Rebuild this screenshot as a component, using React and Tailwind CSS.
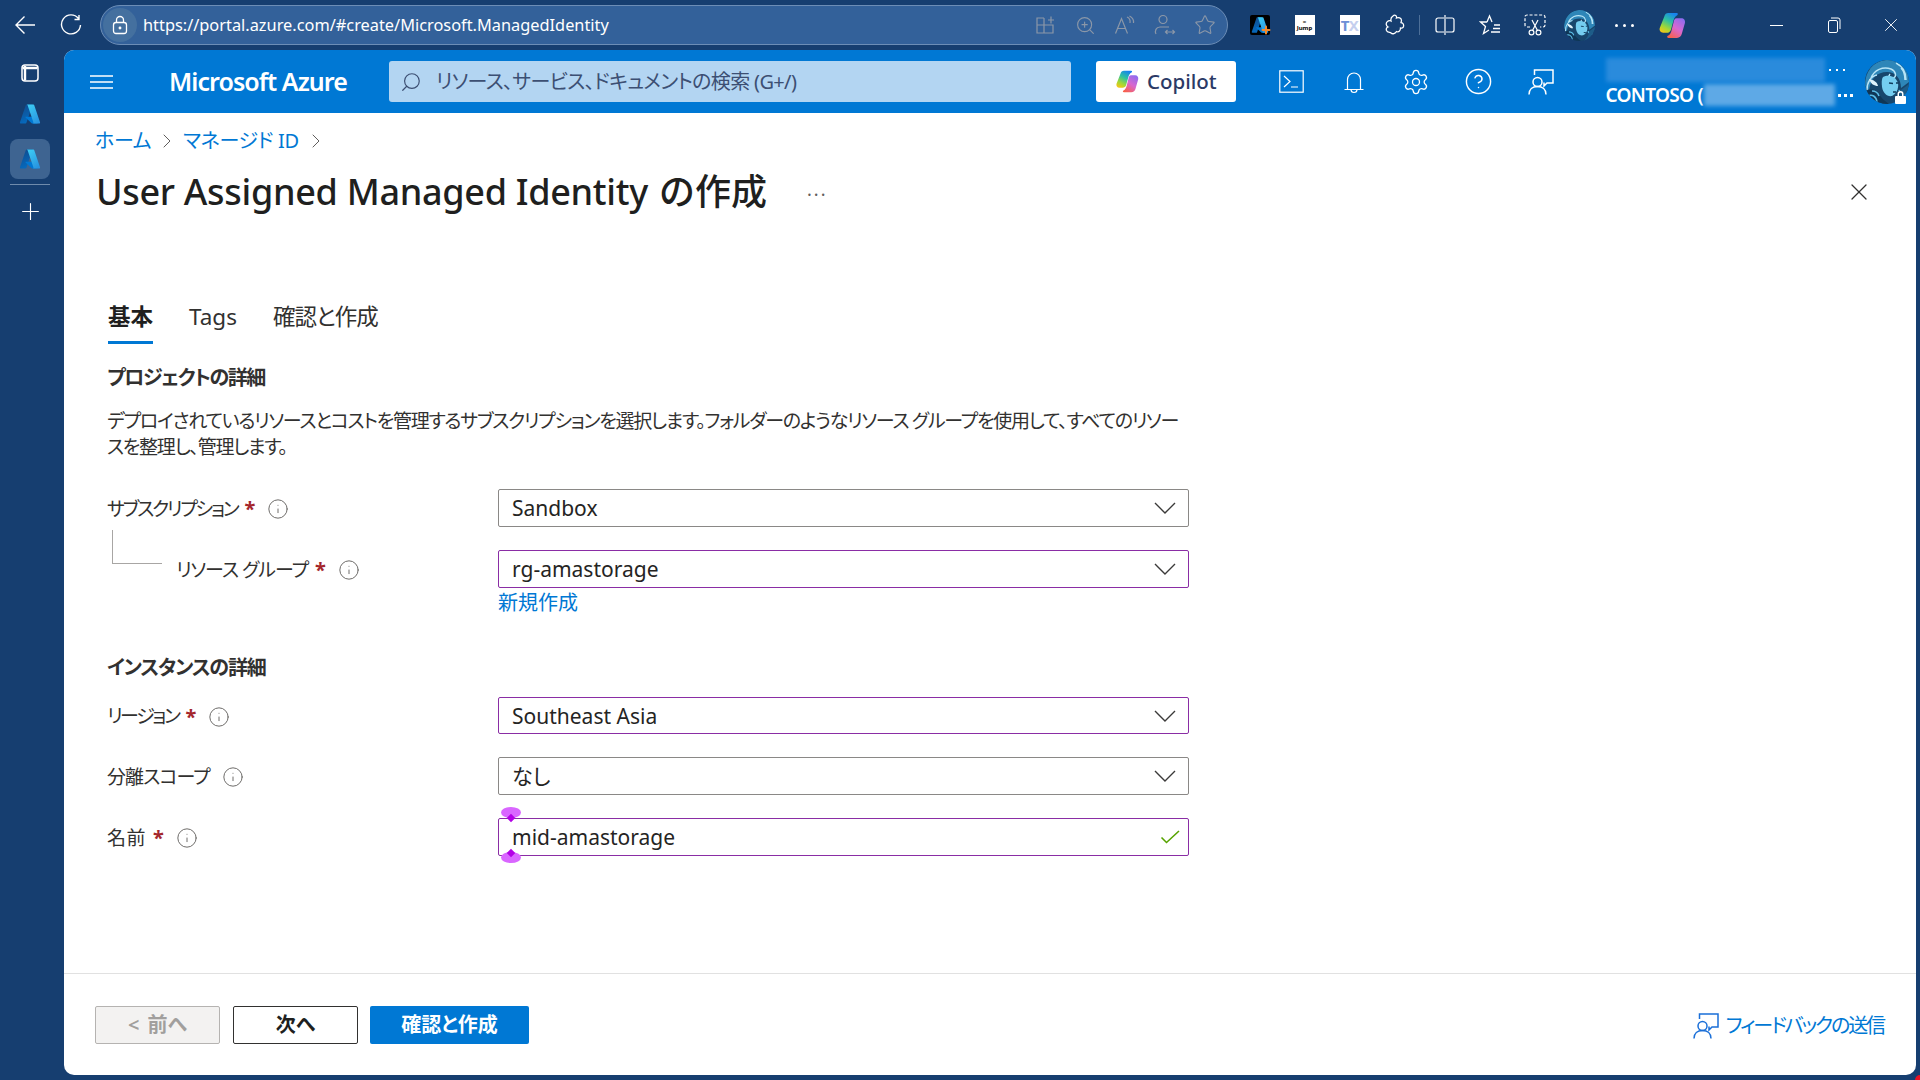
import React from 'react';
import { Info, Settings, CircleHelp, X, ChevronRight, Plus, Search, ZoomIn, Star } from 'lucide-react';

const Azure = ({ id, size = 24 }) => (
  <svg width={size} height={size} viewBox="0 0 96 96">
    <defs>
      <linearGradient id={`${id}a`} x1="0" y1="0" x2="0.3" y2="1">
        <stop offset="0" stopColor="#114a8b" />
        <stop offset="1" stopColor="#0669bc" />
      </linearGradient>
      <linearGradient id={`${id}b`} x1="0.2" y1="0" x2="0.8" y2="1">
        <stop offset="0" stopColor="#3ccbf4" />
        <stop offset="1" stopColor="#2892df" />
      </linearGradient>
    </defs>
    <path fill={`url(#${id}a)`} d="M33.338 6.544h26.038l-27.03 80.087a4.152 4.152 0 0 1-3.933 2.824H8.149a4.145 4.145 0 0 1-3.928-5.47L29.404 9.368a4.152 4.152 0 0 1 3.934-2.825z" />
    <path fill="#0078d4" d="M71.175 60.261h-41.29a1.911 1.911 0 0 0-1.305 3.309l26.532 24.764a4.171 4.171 0 0 0 2.846 1.121h23.38z" />
    <path fill={`url(#${id}b)`} d="M66.595 9.364a4.145 4.145 0 0 0-3.928-2.82H33.648a4.146 4.146 0 0 1 3.928 2.82l25.184 74.62a4.146 4.146 0 0 1-3.928 5.472h29.02a4.146 4.146 0 0 0 3.927-5.472z" />
  </svg>
);

const CopilotLogo = ({ id, size = 28 }) => (
  <svg width={size} height={size} viewBox="0 0 28 28">
    <defs>
      <linearGradient id={`${id}l`} x1="0.7" y1="0" x2="0.2" y2="1">
        <stop offset="0" stopColor="#1683ef" />
        <stop offset="0.4" stopColor="#2fc2a0" />
        <stop offset="0.75" stopColor="#a5d833" />
        <stop offset="1" stopColor="#f5c518" />
      </linearGradient>
      <linearGradient id={`${id}r`} x1="0.8" y1="0" x2="0.2" y2="1">
        <stop offset="0" stopColor="#8d6cf0" />
        <stop offset="0.5" stopColor="#d868d0" />
        <stop offset="1" stopColor="#f8604a" />
      </linearGradient>
    </defs>
    <path fill={`url(#${id}l)`} d="M10 2h8c1.5 0 1.5 1.5.5 2-2 1-3 3-3.5 5l-2.5 9c-.6 2-2 3-4 3H5c-2.5 0-4-2-3.3-4.5L6 5.500C6.700 3 8 2 10 2z" />
    <path fill={`url(#${id}r)`} d="M18 7h4.500c2.500 0 4 2 3.500 4.500L23 22c-.7 2.500-2.200 4-4.700 4H10c-1.500 0-1.500-1.500-.5-2 2-1 3-3 3.500-5l2-8c.4-2 1-4 3-4z" />
  </svg>
);

const Avatar = ({ id, size }) => (
  <svg width={size} height={size} viewBox="0 0 44 44">
    <defs>
      <clipPath id={id}>
        <circle cx="22" cy="22" r="22" />
      </clipPath>
    </defs>
    <g clipPath={`url(#${id})`}>
      <rect width="44" height="44" fill="#17466c" />
      <path d="M0 26C0 8 12-2 28 0c10 2 16 10 16 22l-8 6c0-10-6-16-14-16C12 12 6 18 4 30z" fill="#2e86b8" />
      <path d="M6 18c3-8 12-12 20-9 5 2 6 8 2 9-3 1-5-2-3-4M2 30C2 22 6 16 12 15M31 3c6 3 10 9 10 17M36 8c3 3 4 7 4 12" stroke="#b7e4f6" strokeWidth="1.500" fill="none" />
      <path d="M18 17c5-3 13-1 15 6 1 6-2 11-6 13-5 1-9-3-10-9-.5-4-.5-8 1-10z" fill="#74cdf0" />
      <path d="M24 23l4 .5M31 23h2.500M28 32h3" stroke="#0e3a5a" strokeWidth="1.300" />
      <path d="M0 32c6-4 11-3 14 2 2 4 6 7 10 10H0z" fill="#0f3656" />
      <path d="M3 36c4-2 8 0 9 6M7 31c3 0 6 2 7 5M34 30c2 4 6 5 10 4" stroke="#5bbce6" strokeWidth="1.600" fill="none" />
      <path d="M36 30l8-6v20H28c4-3 7-8 8-14z" fill="#1d5c88" />
      <path d="M4 19c5 1 8 3 9 7-4 0-7-2-9-7z" fill="#dff2fb" />
    </g>
  </svg>
);

const Field = ({ value, focus, check, pins }) => (
  <div className={`relative flex items-center justify-between w-[691px] h-full pl-[13px] bg-white border rounded-[2px] ${focus ? 'border-[#8a2da5]' : 'border-[#8a8886]'}`}>
    {pins && (
      <>
        <span className="absolute left-[2px] top-[-12px] w-[20px] h-[11px] rounded-[50%] bg-[#d966ff]" />
        <span className="absolute left-[9px] top-[-4px] w-[6px] h-[6px] rotate-45 bg-[#b300e6]" />
        <span className="absolute left-[2px] bottom-[-8px] w-[20px] h-[11px] rounded-[50%] bg-[#d966ff]" />
        <span className="absolute left-[9px] bottom-[-1px] w-[6px] h-[6px] rotate-45 bg-[#b300e6]" />
      </>
    )}
    <span className="pt-[1px] text-[21px] text-[#252423] leading-none">{value}</span>
    {check ? (
      <svg className="mr-[8px]" width="20" height="14" viewBox="0 0 20 14" fill="none" stroke="#57a300" strokeWidth="1.600">
        <path d="M1.500 7.500l5 5L19 1" />
      </svg>
    ) : (
      <svg className="mr-[12px]" width="22" height="12" viewBox="0 0 22 12" fill="none" stroke="#3b3a39" strokeWidth="1.400">
        <path d="M1 1l10 10L21 1" />
      </svg>
    )}
  </div>
);

const Label = ({ text, required, tracking }) => (
  <div className="flex items-center pt-[2px] text-[19px] text-[#323130]">
    <span className={tracking}>{text}</span>
    {required && <span className="ml-[7px] text-[20px] font-bold text-[#a4262c] leading-none">*</span>}
    <Info className="ml-[12px] text-[#605e5c]" size={22} strokeWidth={1} />
  </div>
);

const Row = ({ label, className = '', h = 'h-[38px]', children }) => (
  <div className={`flex items-center ${h} ${className}`}>
    <div className="relative w-[391px] shrink-0">{label}</div>
    {children}
  </div>
);

const AddrIcon = ({ children }) => (
  <div className="flex items-center justify-center w-[40px] text-[#8b97a8]">{children}</div>
);

const ToolIcon = ({ w = 'w-[45px]', children }) => (
  <div className={`flex items-center justify-center ${w} shrink-0`}>{children}</div>
);

const HeadIcon = ({ children }) => (
  <div className="flex items-center justify-center w-[62.5px] shrink-0 text-white">{children}</div>
);

const Dots = ({ size = 'w-[2px] h-[2px]', gap = 'gap-[5px]' }) => (
  <div className={`flex ${gap}`}>
    <span className={`${size} bg-white`} />
    <span className={`${size} bg-white`} />
    <span className={`${size} bg-white`} />
  </div>
);

const FeedbackIcon = ({ size = 26, color = 'currentColor' }) => (
  <svg width={size} height={size} viewBox="0 0 26 26" fill="none" stroke={color} strokeWidth="1.500">
    <circle cx="9.500" cy="13" r="4.500" />
    <path d="M1 25.500c0-5 3.500-8 8.500-8s8.500 3 8.500 8" />
    <path d="M6.500 6V1H25v13h-6l-3 3v-3.500" />
  </svg>
);

export default function App() {
  return (
    <div className="relative flex flex-col w-[1920px] h-[1080px] overflow-hidden bg-[#163e70] text-[#323130] font-['Noto_Sans','Noto_Sans_CJK_JP',sans-serif] [font-feature-settings:'palt']">
      {/* browser bar */}
      <div className="flex items-center h-[50px] shrink-0 text-white">
        <div className="flex items-center justify-center w-[50px]">
          <svg width="22" height="20" viewBox="0 0 22 20" fill="none" stroke="#fff" strokeWidth="1.400"><path d="M21 10H2M10.500 1.500L2 10l8.500 8.500" /></svg>
        </div>
        <div className="flex items-center justify-center w-[42px]">
          <svg width="22" height="22" viewBox="0 0 22 22" fill="none" stroke="#fff" strokeWidth="1.400"><path d="M18.500 4.500A9.500 9.500 0 1 0 20.500 11M19 1v4.500h-4.500" /></svg>
        </div>
        <div className="flex items-center w-[1128px] h-[40px] ml-[8px] pr-[2px] rounded-full bg-[#33619a] border border-[#6c8db6]">
          <div className="flex items-center justify-center w-[34px] h-[34px] ml-[2px] rounded-full bg-[#44709f]">
            <svg width="16" height="20" viewBox="0 0 16 20" fill="none" stroke="#fff" strokeWidth="1.300">
              <rect x="1.500" y="7.500" width="13" height="11" rx="2.500" />
              <path d="M4.500 7.500V5a3.500 3.500 0 0 1 7 0v2.500" />
              <circle cx="8" cy="13" r="0.800" fill="#fff" />
            </svg>
          </div>
          <span className="ml-[6px] text-[16.35px] text-white whitespace-nowrap">https://portal.azure.com/#create/Microsoft.ManagedIdentity</span>
          <div className="flex items-center ml-auto">
            <AddrIcon>
              <svg width="20" height="20" viewBox="0 0 20 20" fill="none" stroke="currentColor" strokeWidth="1.200">
                <path d="M9 3H2v15h16v-8H2M9 3v15M13 5h6M16 1.500v7" />
              </svg>
            </AddrIcon>
            <AddrIcon><ZoomIn size={21} strokeWidth={1.300} /></AddrIcon>
            <AddrIcon>
              <svg width="22" height="20" viewBox="0 0 22 20" fill="none" stroke="currentColor" strokeWidth="1.200">
                <path d="M1.500 18.500L7.500 3.500l6 15M3.500 13.500h8M13 2c2.500 1 3.500 3 3 6M15.500 1c3 1.500 4.500 3.500 4 7" />
              </svg>
            </AddrIcon>
            <AddrIcon>
              <svg width="22" height="22" viewBox="0 0 22 22" fill="none" stroke="currentColor" strokeWidth="1.200">
                <circle cx="9" cy="5.500" r="4" />
                <path d="M2 20c-1.500-3 0-7 4-7h9M12 18h8M13.500 16l-2 2 2 2M18.500 16l2 2-2 2" />
              </svg>
            </AddrIcon>
            <AddrIcon><Star size={22} strokeWidth={1.200} /></AddrIcon>
          </div>
        </div>
        <div className="flex items-center ml-[9px]">
          <ToolIcon>
            <div className="relative flex items-center justify-center w-[20px] h-[20px] rounded-[2px] bg-black">
              <Azure id="ext" size={18} />
              <Plus className="absolute right-[-2px] bottom-[-1px] text-[#f58a2b]" size={12} strokeWidth={4} />
            </div>
          </ToolIcon>
          <ToolIcon>
            <div className="flex flex-col items-center justify-center w-[20px] h-[20px] bg-white text-black leading-none">
              <span className="text-[6px] font-bold leading-[6px]">=</span>
              <span className="text-[6px] font-bold leading-[6px]">Jump</span>
            </div>
          </ToolIcon>
          <ToolIcon>
            <div className="flex items-center justify-center w-[20px] h-[20px] bg-white">
              <span className="text-[15px] font-bold text-[#6d8fd6] leading-none tracking-[-0.5px]">T<span className="text-[#c5cfee]">X</span></span>
            </div>
          </ToolIcon>
          <ToolIcon>
            <svg width="20" height="22" viewBox="0 0 20 22" fill="none" stroke="#fff" strokeWidth="1.300">
              <path d="M8 2c2-2 4 0 3.500 2 2-1 5 0 5 2.500 0 1.500-1 2-1 2 2.500 0 3.500 2 3 4-.5 1.500-2 2-3 1.500 0 3-2 4.500-4 3.500-1 2-4 3-5.500 1.500C5 18 2.500 19 1.500 16.500 1 15 1.500 13.500 3 13 1 12 .5 9 2.500 7.500 3.500 6.500 5 6.500 6 7 5.500 5 6.500 3 8 2z" />
            </svg>
          </ToolIcon>
          <div className="w-px h-[20px] mx-[2px] bg-[#4d6f98]" />
          <ToolIcon>
            <svg width="20" height="22" viewBox="0 0 20 22" fill="none" stroke="#fff" strokeWidth="1.200">
              <path d="M9 4H3a2 2 0 0 0-2 2v10a2 2 0 0 0 2 2h6M11 4h6a2 2 0 0 1 2 2v10a2 2 0 0 1-2 2h-6M10 1v20" />
            </svg>
          </ToolIcon>
          <ToolIcon>
            <svg width="22" height="22" viewBox="0 0 22 22" fill="none" stroke="#fff" strokeWidth="1.300">
              <path d="M8 8L10.500 2 13 8M8 8H1.500l5 4.500-2 7L10 16M15 11h6M14 14.500h7M12 18h9" />
            </svg>
          </ToolIcon>
          <ToolIcon>
            <svg width="22" height="24" viewBox="0 0 22 24" fill="none" stroke="#fff" strokeWidth="1.200">
              <path strokeDasharray="3 1.800" d="M6 14H3a2 2 0 0 1-2-2V4a2 2 0 0 1 2-2h16a2 2 0 0 1 2 2v8a2 2 0 0 1-2 2h-3" />
              <circle cx="7.500" cy="19.500" r="2.400" />
              <circle cx="14.500" cy="19.500" r="2.400" />
              <path d="M8.500 17.500L14 7M13.500 17.500L8 7" />
            </svg>
          </ToolIcon>
          <ToolIcon>
            <Avatar id="profile" size={31} />
          </ToolIcon>
          <ToolIcon>
            <Dots size="w-[3px] h-[3px] rounded-full" />
          </ToolIcon>
          <ToolIcon w="w-[50px]"><CopilotLogo id="edge" size={29} /></ToolIcon>
        </div>
        <div className="flex items-center ml-auto">
          <div className="flex items-center justify-center w-[57px]"><span className="w-[13px] h-px bg-white" /></div>
          <div className="flex items-center justify-center w-[57px]">
            <svg width="14" height="16" viewBox="0 0 14 16" fill="none" stroke="#fff" strokeWidth="1">
              <rect x="1.500" y="3.500" width="9" height="12" rx="1.500" />
              <path d="M4 1h7a2 2 0 0 1 2 2v9" />
            </svg>
          </div>
          <div className="flex items-center justify-center w-[58px]"><X size={22} strokeWidth={1} className="text-white" /></div>
        </div>
      </div>

      <div className="flex flex-1 min-h-0">
        {/* side rail */}
        <div className="flex flex-col items-center w-[64px] pr-[4px] shrink-0 text-white">
          <svg className="mt-[13px]" width="20" height="20" viewBox="0 0 20 20" fill="none" stroke="#fff">
            <rect x="2" y="2" width="16" height="16" rx="3" strokeWidth="1.500" />
            <path d="M2.500 5h15M5 3v14.500" strokeWidth="2.400" />
          </svg>
          <div className="mt-[20px]"><Azure id="rail1" size={22} /></div>
          <div className="flex items-center justify-center w-[40px] h-[40px] mt-[14px] rounded-[8px] bg-[#3e6491]"><Azure id="rail2" size={22} /></div>
          <div className="w-[40px] h-px mt-[5px] bg-[#6f8bac]" />
          <Plus className="mt-[13px]" size={27} strokeWidth={1} />
        </div>

        {/* portal card */}
        <div className="flex flex-col flex-1 mr-[4px] mb-[5px] bg-white rounded-[10px] overflow-hidden">
          <div className="flex items-center h-[63px] shrink-0 bg-[#0078d4] text-white">
            <svg className="ml-[26px]" width="23" height="14" viewBox="0 0 23 14" stroke="#fff" strokeWidth="1.300">
              <path d="M0 1h23M0 7h23M0 13h23" />
            </svg>
            <span className="ml-[56px] w-[220px] text-[25px] font-semibold tracking-[-0.95px] whitespace-nowrap">Microsoft Azure</span>
            <div className="flex items-center w-[682px] h-[41px] rounded-[3px] bg-[#b3d5f2] text-[#3c4f73]">
              <Search className="ml-[11px] -scale-x-100" size={22} strokeWidth={1.300} />
              <span className="ml-[14px] text-[20px] tracking-[-0.65px] whitespace-nowrap">リソース、サービス、ドキュメントの検索 (G+/)</span>
            </div>
            <div className="flex items-center w-[140px] h-[41px] ml-[25px] pl-[19px] rounded-[3px] bg-white">
              <CopilotLogo id="head" size={25} />
              <span className="ml-[7px] text-[20.5px] font-medium text-[#2b3a66]">Copilot</span>
            </div>
            <div className="flex items-center ml-[24px]">
              <HeadIcon>
                <svg width="25" height="23" viewBox="0 0 25 23" fill="none" stroke="#fff" strokeWidth="1.200">
                  <rect x="0.800" y="0.800" width="23.400" height="21.400" />
                  <path d="M5 6l6 5.500L5 17M12 17h7" />
                </svg>
              </HeadIcon>
              <HeadIcon>
                <svg width="20" height="24" viewBox="0 0 20 24" fill="none" stroke="#fff" strokeWidth="1.200">
                  <path d="M3.500 19V9.500a6.500 6.500 0 0 1 13 0V19M0.500 19.500h19M7 19.500a3 3 0 0 0 6 0" />
                </svg>
              </HeadIcon>
              <HeadIcon><Settings size={28} strokeWidth={1.100} /></HeadIcon>
              <HeadIcon><CircleHelp size={29} strokeWidth={1.200} /></HeadIcon>
              <HeadIcon><FeedbackIcon size={26} /></HeadIcon>
            </div>
            <div className="flex flex-col w-[249px] ml-[33px]">
              <div className="flex items-center h-[27px]">
                <div className="w-[219px] h-[24px] bg-[#2a8bdc] blur-[2px]" />
                <div className="ml-[4px]"><Dots /></div>
              </div>
              <div className="flex items-center h-[24px]">
                <span className="w-[98px] text-[19px] font-semibold whitespace-nowrap tracking-[-0.7px]">CONTOSO (</span>
                <div className="w-[131px] h-[22px] bg-[#5ea9e6] blur-[2px]" />
                <div className="ml-[3px]"><Dots size="w-[3px] h-[3px]" gap="gap-[3px]" /></div>
              </div>
            </div>
            <div className="relative ml-[10px] w-[44px] h-[44px] shrink-0">
              <Avatar id="account" size={44} />
              <svg className="absolute right-[2px] bottom-0" width="13" height="14" viewBox="0 0 13 14" fill="#fff">
                <path fillRule="evenodd" d="M3.500 6V4a3 3 0 0 1 6 0v2h1.500a1 1 0 0 1 1 1v6a1 1 0 0 1-1 1H2a1 1 0 0 1-1-1V7a1 1 0 0 1 1-1zM5 6h3V4a1.500 1.500 0 0 0-3 0z" />
              </svg>
            </div>
          </div>

          {/* breadcrumb and title */}
          <div className="flex items-center h-[24px] mt-[16px] pl-[31px] text-[20px] tracking-[-0.35px] text-[#0078d4]">
            <span>ホーム</span>
            <ChevronRight className="mx-[4px] text-[#605e5c]" size={24} strokeWidth={1} />
            <span>マネージド ID</span>
            <ChevronRight className="ml-[5px] text-[#605e5c]" size={24} strokeWidth={1} />
          </div>
          <div className="flex items-center h-[50px] mt-[14px] pl-[32px] pr-[43px]">
            <h1 className="text-[36px] font-medium text-[#201f1e] tracking-[-0.3px] whitespace-nowrap">
              User Assigned Managed Identity <span className="ml-[2px] [font-feature-settings:normal] tracking-[0px]">の作成</span>
            </h1>
            <span className="ml-[40px] pb-[6px] text-[18px] text-[#605e5c] tracking-[2px] leading-none">...</span>
            <X className="ml-auto text-[#323130]" size={28} strokeWidth={1.100} />
          </div>

          {/* form */}
          <div className="pl-[43px]">
            <div className="flex items-start gap-[36px] h-[42px] mt-[85px] ml-[1px] text-[22.5px] leading-[30px]">
              <div className="h-[42px] border-b-[3px] border-[#0078d4] font-semibold text-[#201f1e]">基本</div>
              <div>Tags</div>
              <div className="tracking-[-1px]">確認と作成</div>
            </div>
            <h2 className="h-[28px] mt-[20px] text-[20px] leading-[28px] font-bold tracking-[-1.4px] text-[#323130]">プロジェクトの詳細</h2>
            <p className="mt-[16px] text-[19px] leading-[26px] tracking-[-1.25px]">
              デプロイされているリソースとコストを管理するサブスクリプションを選択します。フォルダーのようなリソース グループを使用して、すべてのリソー
              <br />
              スを整理し、管理します。
            </p>
            <Row className="mt-[29px]" label={<Label text="サブスクリプション" required tracking="tracking-[-2.2px]" />}>
              <Field value="Sandbox" />
            </Row>
            <Row
              className="mt-[23px]"
              label={
                <>
                  <span className="absolute left-[5px] top-[-24px] w-[50px] h-[34px] border-l border-b border-[#a8a6a4]" />
                  <div className="pl-[69px]"><Label text="リソース グループ" required tracking="tracking-[-1px]" /></div>
                </>
              }
            >
              <Field value="rg-amastorage" focus />
            </Row>
            <a className="block h-[26px] mt-[2px] ml-[391px] text-[20px] leading-[26px] text-[#0078d4]">新規作成</a>
            <h2 className="h-[28px] mt-[38px] text-[20px] leading-[28px] font-bold tracking-[-1.2px] text-[#323130]">インスタンスの詳細</h2>
            <Row className="mt-[15px]" h="h-[37px]" label={<Label text="リージョン" required tracking="tracking-[-2.4px]" />}>
              <Field value="Southeast Asia" focus />
            </Row>
            <Row className="mt-[23px]" label={<Label text="分離スコープ" tracking="tracking-[-0.9px]" />}>
              <Field value="なし" />
            </Row>
            <Row className="mt-[23px]" label={<Label text="名前" required tracking="tracking-[0.5px]" />}>
              <Field value="mid-amastorage" focus check pins />
            </Row>
          </div>

          {/* footer */}
          <div className="flex items-center mt-auto h-[102px] pt-[1px] pl-[31px] pr-[32px] border-t border-[#e1e1e1]">
            <button className="w-[125px] h-[38px] rounded-[2px] border border-[#b5b3b1] bg-[#f3f2f1] text-[20px] font-semibold text-[#a19f9d] [word-spacing:3px]">&lt; 前へ</button>
            <button className="w-[125px] h-[38px] ml-[13px] rounded-[2px] border border-[#323130] bg-white text-[20px] font-semibold text-[#201f1e]">次へ</button>
            <button className="w-[159px] h-[38px] ml-[12px] rounded-[2px] bg-[#0078d4] text-[20px] font-semibold text-white">確認と作成</button>
            <div className="flex items-center ml-auto pt-[2px] text-[20px] tracking-[-2.1px] text-[#0078d4]">
              <FeedbackIcon size={26} color="#1a6fd8" />
              <span className="ml-[7px]">フィードバックの送信</span>
            </div>
          </div>
        </div>
      </div>
      {/* corner artefact of the capture */}
      <span className="absolute right-0 bottom-0 w-[5px] h-[5px] rounded-tl-[5px] bg-[#e81123]" />
    </div>
  );
}
